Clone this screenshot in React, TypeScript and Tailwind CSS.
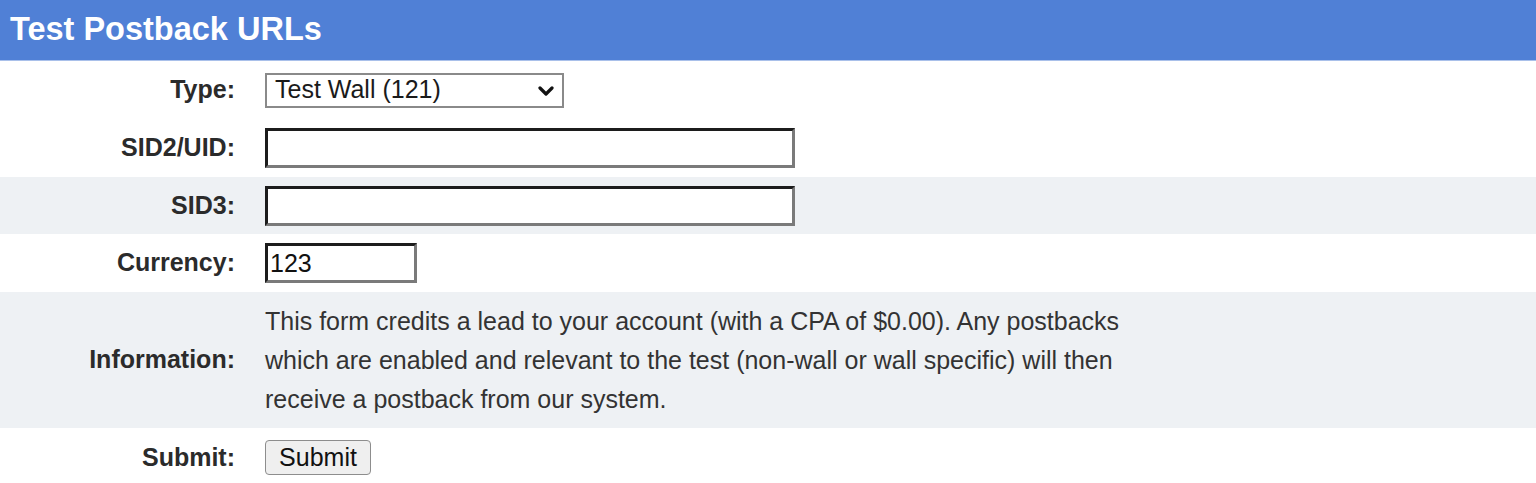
import React from "react";

const font = { fontFamily: '"Liberation Sans", Arial, Helvetica, sans-serif' };

function Row({
  label,
  gray,
  h,
  children,
}: {
  label: string;
  gray?: boolean;
  h: string;
  children: React.ReactNode;
}) {
  return (
    <div className={`flex items-center ${h} ${gray ? "bg-[#eef1f4]" : "bg-white"}`}>
      <div className="w-[235px] shrink-0 text-right text-[25px] font-bold text-[#2b2b2b]">{label}</div>
      <div className="pl-[30px] flex items-center">{children}</div>
    </div>
  );
}

const inputCls =
  "h-[40px] bg-white border-[3px] border-t-[#1c1c1c] border-l-[#1c1c1c] border-b-[#7a7a7a] border-r-[#7a7a7a] px-[2px] text-[25px] text-[#111] outline-none";

export default function App() {
  return (
    <div style={font} className="w-[1536px] h-[483px] bg-white overflow-hidden">
      <div className="h-[61px] bg-[#5080d6] flex items-center pl-[10px] border-b border-[#a9c0ea]">
        <h1 className="text-[32.5px] font-bold text-white leading-none -mt-[1px]">Test Postback URLs</h1>
      </div>
      <Row label="Type:" h="h-[58px]">
        <div className="relative w-[299px] h-[35px] border-2 border-[#8a8a8a] bg-white flex items-center">
          <span className="pl-[8px] text-[25px] text-[#1a1a1a]">Test Wall (121)</span>
          <svg className="absolute right-[8px] top-[11px]" width="16" height="11" viewBox="0 0 16 11">
            <path d="M2 2 L8 8 L14 2" stroke="#111" strokeWidth="3.2" fill="none" strokeLinecap="round" strokeLinejoin="round" />
          </svg>
        </div>
      </Row>
      <Row label="SID2/UID:" h="h-[58px]">
        <input className={`${inputCls} w-[530px]`} defaultValue="" />
      </Row>
      <Row label="SID3:" gray h="h-[57px]">
        <input className={`${inputCls} w-[530px]`} defaultValue="" />
      </Row>
      <Row label="Currency:" h="h-[58px]">
        <input className={`${inputCls} w-[152px] h-[39px]`} defaultValue="123" />
      </Row>
      <Row label="Information:" gray h="h-[136px]">
        <p className="text-[25px] leading-[39px] text-[#333] w-[880px]">
          This form credits a lead to your account (with a CPA of $0.00). Any postbacks which are enabled and relevant
          to the test (non-wall or wall specific) will then receive a postback from our system.
        </p>
      </Row>
      <div className="flex items-start pt-[12px] h-[55px] bg-white">
        <div className="w-[235px] shrink-0 text-right text-[25px] font-bold text-[#2b2b2b] leading-[35px]">Submit:</div>
        <div className="pl-[30px]">
          <button className="h-[35px] w-[106px] rounded-[4px] border border-[#8d8d8d] bg-[#efefef] text-[25px] text-[#111] leading-none">
            Submit
          </button>
        </div>
      </div>
    </div>
  );
}
